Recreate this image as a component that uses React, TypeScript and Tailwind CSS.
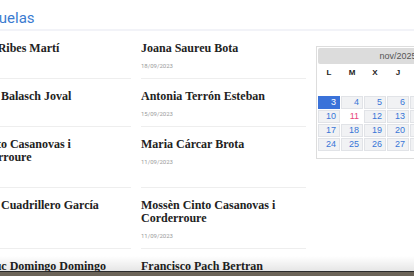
import React from "react";

type Entry = { name: string; date: string };

const rows: Entry[][] = [
  [
    { name: "Josep Ribes Martí", date: "19/09/2023" },
    { name: "Joana Saureu Bota", date: "18/09/2023" },
  ],
  [
    { name: "Maria Balasch Joval", date: "16/09/2023" },
    { name: "Antonia Terrón Esteban", date: "15/09/2023" },
  ],
  [
    { name: "P. Cinto Casanovas i Corderroure", date: "12/09/2023" },
    { name: "Maria Cárcar Brota", date: "11/09/2023" },
  ],
  [
    { name: "Josefa Cuadrillero García", date: "11/09/2023" },
    { name: "Mossèn Cinto Casanovas i Corderroure", date: "11/09/2023" },
  ],
  [
    { name: "M. Lluc Domingo Domingo", date: "10/09/2023" },
    { name: "Francisco Pach Bertran", date: "10/09/2023" },
  ],
];

function Item({ entry, first }: { entry: Entry; first: boolean }) {
  return (
    <div
      className={
        first
          ? "pt-[11px] pb-[8px]"
          : "border-t border-[#eeeeee] pt-[11px] pb-[8px]"
      }
    >
      <div className="font-['Liberation_Serif',serif] text-[12px] font-bold leading-[13px] text-[#222222]">
        {entry.name}
      </div>
      <div className="mt-[7px] font-['Roboto',sans-serif] text-[6px] leading-[8px] text-[#9b9b9b]">
        {entry.date}
      </div>
    </div>
  );
}

const weeks: (number | null)[][] = [
  [null, null, null, null, null, 1, 2],
  [3, 4, 5, 6, 7, 8, 9],
  [10, 11, 12, 13, 14, 15, 16],
  [17, 18, 19, 20, 21, 22, 23],
  [24, 25, 26, 27, 28, 29, 30],
];

function Cell({ d }: { d: number | null }) {
  if (d === null) return <div className="h-[13px]" />;
  if (d === 3)
    return (
      <div className="h-[13px] border border-[#3a72d9] bg-[#3a72d9] pr-[3px] text-right text-[9px] leading-[11px] text-white">
        {d}
      </div>
    );
  if (d === 11)
    return (
      <div className="h-[13px] border border-white bg-white pr-[3px] text-right text-[9px] leading-[11px] text-[#e8467c]">
        {d}
      </div>
    );
  return (
    <div className="h-[13px] border border-[#e1e3e7] bg-[#f1f2f4] pr-[3px] text-right text-[9px] leading-[11px] text-[#3875d7]">
      {d}
    </div>
  );
}

function Calendar() {
  return (
    <div className="ml-[10px] mt-[15px] w-[164px] shrink-0 border border-[#dddddd] bg-white p-[1px] pb-[7px] font-['Liberation_Sans',Arial,sans-serif]">
      <div className="h-[16px] rounded-[2px] bg-[#dcdcdc] text-center text-[9px] leading-[16px] text-[#555555]">
        nov/2025
      </div>
      <div className="grid h-[18px] grid-cols-[repeat(7,22px)] items-center gap-x-[1px] text-center text-[8px] font-bold text-[#222222]">
        <span>L</span>
        <span>M</span>
        <span>X</span>
        <span>J</span>
        <span>V</span>
        <span>S</span>
        <span>D</span>
      </div>
      <div className="grid grid-cols-[repeat(7,22px)] gap-[1px]">
        {weeks.flat().map((d, i) => (
          <Cell key={i} d={d} />
        ))}
      </div>
    </div>
  );
}

export default function App() {
  return (
    <div className="relative h-[276px] w-[414px] overflow-hidden bg-white">
      <div className="h-[31px] border-b-2 border-[#f2f3f8]">
        <div className="-ml-[34px] pl-[8px] pt-[8px] font-['Roboto',sans-serif] text-[15px] leading-[20px] text-[#3a7bd0]">
          Esquelas
        </div>
      </div>
      <div className="-ml-[34px] flex items-start">
        <div className="grid shrink-0 grid-cols-[165px_165px] gap-x-[10px]">
          {rows.map((r, ri) =>
            r.map((e, ci) => (
              <Item key={`${ri}-${ci}`} entry={e} first={ri === 0} />
            ))
          )}
        </div>
        <Calendar />
      </div>
      <div className="pointer-events-none absolute inset-x-0 bottom-0">
        <div className="h-[15px] bg-linear-to-b from-transparent to-black/10" />
        <div className="h-px bg-[#2a2a2a]" />
        <div className="h-[4px] bg-[#6b6357]" />
      </div>
    </div>
  );
}
